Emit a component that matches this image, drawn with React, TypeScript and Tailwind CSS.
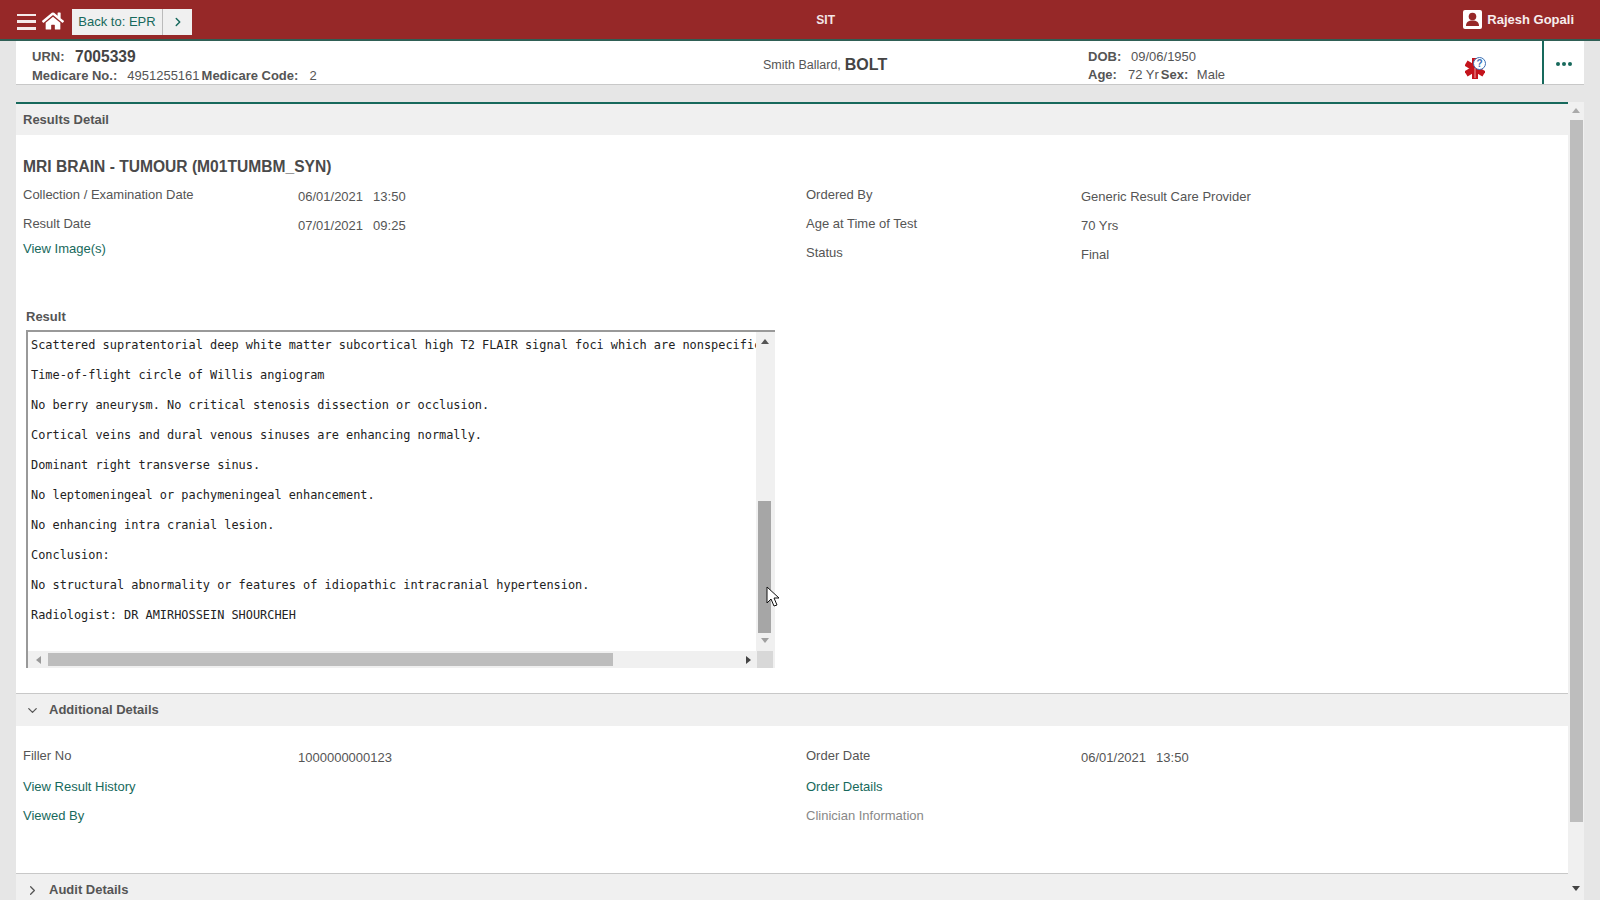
import React from 'react';
import { FaHome } from 'react-icons/fa';
import { ChevronDown, ChevronRight } from 'lucide-react';

const resultLines = [
  'Scattered supratentorial deep white matter subcortical high T2 FLAIR signal foci which are nonspecific.',
  'Time-of-flight circle of Willis angiogram',
  'No berry aneurysm. No critical stenosis dissection or occlusion.',
  'Cortical veins and dural venous sinuses are enhancing normally.',
  'Dominant right transverse sinus.',
  'No leptomeningeal or pachymeningeal enhancement.',
  'No enhancing intra cranial lesion.',
  'Conclusion:',
  'No structural abnormality or features of idiopathic intracranial hypertension.',
  'Radiologist: DR AMIRHOSSEIN SHOURCHEH',
];

const Label = ({ children }: { children: React.ReactNode }) => (
  <div className="text-[13px] leading-[18px] text-[#555]">{children}</div>
);

const Value = ({ children }: { children: React.ReactNode }) => (
  <div className="pt-[2px] text-[13px] leading-[18px] text-[#555]">{children}</div>
);

const Link = ({ children }: { children: React.ReactNode }) => (
  <div className="pt-[2px] text-[13px] leading-[18px] text-[#17695c]">{children}</div>
);

const DateTime = ({ date, time }: { date: string; time: string }) => (
  <Value>
    {date}
    <span className="ml-[10px]">{time}</span>
  </Value>
);

const Up = ({ color }: { color: string }) => (
  <svg width="8" height="5" viewBox="0 0 8 5"><path d="M4 0L8 5H0Z" fill={color} /></svg>
);
const Down = ({ color }: { color: string }) => (
  <svg width="8" height="5" viewBox="0 0 8 5"><path d="M0 0H8L4 5Z" fill={color} /></svg>
);

export default function App() {
  return (
    <div className="relative flex h-[900px] w-[1600px] flex-col overflow-hidden bg-[#e6e6e6] font-['Liberation_Sans',Arial,sans-serif]">
      {/* Top bar */}
      <div className="flex h-[39px] shrink-0 items-center bg-[#962828] pl-[17px] pr-[26px]">
        <div className="mt-[4px] flex h-[16px] w-[19px] flex-col justify-between">
          <div className="h-[2.5px] bg-white/90" />
          <div className="h-[2.5px] bg-white/90" />
          <div className="h-[2.5px] bg-white/90" />
        </div>
        <FaHome className="ml-[6px] mt-[3px] text-white" size={22} />
        <div className="ml-[8px] mt-[5px] flex h-[26px] items-center bg-[#f0f0f0] text-[13px] text-[#17695c]">
          <div className="flex h-full w-[91px] items-center justify-center border-r border-[#bbb]">Back to: EPR</div>
          <div className="flex h-full w-[29px] items-center justify-center">
            <ChevronRight size={14} strokeWidth={2.5} />
          </div>
        </div>
        <div className="flex-1 pr-[4px] text-center text-[12px] font-bold text-[#f3e6e6]">SIT</div>
        <div className="flex items-center gap-[5px] text-[13px] font-bold text-[#f7eeee]">
          <svg width="19" height="19" viewBox="0 0 19 19">
            <rect width="19" height="19" rx="2" fill="#fff" />
            <circle cx="9.5" cy="6.5" r="3.8" fill="#962828" />
            <path d="M3 16c0-4 2.5-5.5 6.5-5.5S16 12 16 16Z" fill="#962828" />
          </svg>
          Rajesh Gopali
        </div>
      </div>
      <div className="h-[2px] shrink-0 bg-[#2f5f55]" />

      {/* Patient banner */}
      <div className="ml-[16px] mr-[16px] flex h-[44px] shrink-0 border-b border-[#c8c8c8] bg-white text-[13px] text-[#555]">
        <div className="w-[747px] shrink-0 pl-[16px] pt-[6px]">
          <div className="flex h-[20px] items-center">
            <span className="w-[43px] font-bold">URN:</span>
            <span className="text-[15.6px] font-bold text-[#444]">7005339</span>
          </div>
          <div className="flex h-[17px] items-center whitespace-nowrap">
            <span className="font-bold">Medicare No.:</span>
            <span className="ml-[10px]">4951255161</span>
            <span className="ml-[2px] font-bold">Medicare Code:</span>
            <span className="ml-[11px]">2</span>
          </div>
        </div>
        <div className="flex w-[325px] shrink-0 items-center pt-[5px] whitespace-nowrap">
          <span className="text-[12.5px]">Smith Ballard,</span>
          <span className="ml-[4px] text-[16px] font-bold text-[#444]">BOLT</span>
        </div>
        <div className="w-[376px] shrink-0 pt-[7px]">
          <div className="flex h-[18px] items-center">
            <span className="w-[43px] font-bold">DOB:</span>
            <span>09/06/1950</span>
          </div>
          <div className="flex h-[18px] items-center">
            <span className="w-[40px] font-bold">Age:</span>
            <span>72 Yr</span>
            <span className="ml-[2px] w-[36px] font-bold">Sex:</span>
            <span>Male</span>
          </div>
        </div>
        <div className="relative w-[78px] shrink-0">
          <svg className="absolute left-[1px] top-[17px]" width="20" height="21" viewBox="0 0 20 21">
            <g stroke="#c4141c" strokeWidth="6">
              <path d="M10 0V21" />
              <path d="M1 5L19 16" />
              <path d="M1 16L19 5" />
            </g>
            <path d="M10 10V20" stroke="#f0a0a0" strokeWidth="1" />
          </svg>
          <div className="absolute left-[9px] top-[16px] flex h-[13px] w-[13px] items-center justify-center rounded-full border border-[#3b6fb5] bg-white text-[10px] font-bold leading-none text-[#3b6fb5]">
            ?
          </div>
        </div>
        <div className="flex w-[42px] shrink-0 items-center justify-center gap-[2px] border-l-2 border-[#17695c] pt-[2px]">
          <div className="h-[4px] w-[4px] rounded-full bg-[#17695c]" />
          <div className="h-[4px] w-[4px] rounded-full bg-[#17695c]" />
          <div className="h-[4px] w-[4px] rounded-full bg-[#17695c]" />
        </div>
      </div>

      <div className="ml-[16px] mr-[16px] mt-[17px] flex min-h-0 flex-1">
        {/* Main content */}
        <div className="w-[1552px] shrink-0 overflow-hidden border-t-2 border-[#17695c] bg-white">
          <div className="flex h-[31px] items-center bg-[#f0f0f0] pl-[7px] text-[13px] font-bold text-[#555]">Results Detail</div>

          <div className="pl-[7px] pt-[22px]">
            <div className="text-[15.6px] font-bold leading-[20px] text-[#4a4a4a]">MRI BRAIN - TUMOUR (M01TUMBM_SYN)</div>
            <div className="mt-[9px] grid grid-cols-[275px_508px_275px_1fr] auto-rows-[29px]">
              <Label>Collection / Examination Date</Label>
              <DateTime date="06/01/2021" time="13:50" />
              <Label>Ordered By</Label>
              <Value>Generic Result Care Provider</Value>
              <Label>Result Date</Label>
              <DateTime date="07/01/2021" time="09:25" />
              <Label>Age at Time of Test</Label>
              <Value>70 Yrs</Value>
              <div className="-mt-[6px]"><Link>View Image(s)</Link></div>
              <div />
              <Label>Status</Label>
              <Value>Final</Value>
            </div>
          </div>

          <div className="ml-[10px] mt-[35px] text-[13px] font-bold leading-[18px] text-[#555]">Result</div>
          <div className="ml-[10px] mt-[4px] flex h-[338px] w-[749px] flex-col border-l-2 border-t-2 border-[#999]">
            <div className="flex min-h-0 flex-1">
              <div className="min-w-0 flex-1 overflow-hidden whitespace-nowrap pl-[3px] font-['DejaVu_Sans_Mono',monospace] text-[11.9px] text-[#222]">
                {resultLines.map((line) => (
                  <div key={line} className="h-[30px] leading-[26px]">{line}</div>
                ))}
              </div>
              <div className="flex w-[19px] shrink-0 flex-col items-center bg-[#f0f0f0] pr-[2px]">
                <div className="mt-[7px]"><Up color="#555" /></div>
                <div className="mt-[157px] h-[132px] w-[13px] bg-[#a6a6a6]" />
                <div className="mt-[5px]"><Down color="#a0a0a0" /></div>
              </div>
            </div>
            <div className="flex h-[17px] shrink-0 items-center bg-[#f0f0f0]">
              <div className="ml-[8px] h-0 w-0 border-y-[4px] border-r-[5px] border-y-transparent border-r-[#999]" />
              <div className="ml-[7px] h-[13px] w-[565px] bg-[#bdbdbd]" />
              <div className="ml-[133px] h-0 w-0 border-y-[4px] border-l-[5px] border-y-transparent border-l-[#444]" />
              <div className="ml-[6px] h-full w-[16px] bg-[#d8d8d8]" />
            </div>
          </div>

          {/* Additional Details */}
          <div className="mt-[25px] flex h-[33px] items-center border-t border-[#c8c8c8] bg-[#f0f0f0] text-[13px] font-bold text-[#555]">
            <ChevronDown className="ml-[9px]" size={15} strokeWidth={2} />
            <span className="ml-[9px]">Additional Details</span>
          </div>
          <div className="grid auto-rows-[29px] grid-cols-[275px_508px_275px_1fr] pl-[7px] pt-[21px]">
            <Label>Filler No</Label>
            <Value>1000000000123</Value>
            <Label>Order Date</Label>
            <DateTime date="06/01/2021" time="13:50" />
            <Link>View Result History</Link>
            <div />
            <Link>Order Details</Link>
            <div />
            <Link>Viewed By</Link>
            <div />
            <div className="pt-[2px] text-[13px] leading-[18px] text-[#888]">Clinician Information</div>
            <div />
          </div>

          {/* Audit Details */}
          <div className="mt-[39px] flex h-[33px] items-center border-t border-[#c8c8c8] bg-[#f0f0f0] text-[13px] font-bold text-[#555]">
            <ChevronRight className="ml-[9px]" size={15} strokeWidth={2} />
            <span className="ml-[9px]">Audit Details</span>
          </div>
        </div>

        {/* Page scrollbar */}
        <div className="flex w-[16px] shrink-0 flex-col items-center bg-[#f0f0f0]">
          <div className="mt-[6px]"><Up color="#aaa" /></div>
          <div className="mt-[7px] h-[702px] w-[13px] bg-[#bdbdbd]" />
          <div className="mt-[64px]"><Down color="#444" /></div>
        </div>
      </div>

      {/* Mouse cursor over the result scrollbar */}
      <svg className="absolute left-[766px] top-[586px]" width="14" height="22" viewBox="0 0 14 22">
        <path d="M1 1V17L5 13L8 20L11 19L8 12H13Z" fill="#fff" stroke="#111" strokeWidth="1" />
      </svg>
    </div>
  );
}
